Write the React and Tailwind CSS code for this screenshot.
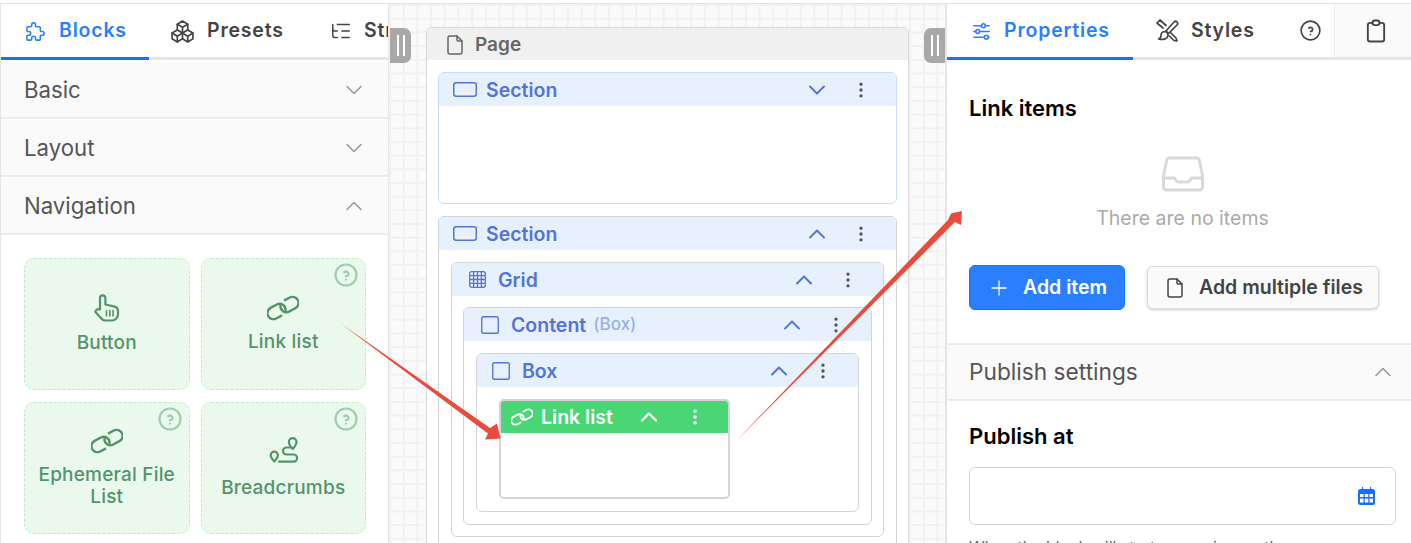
import React from 'react';
import {
  TbPuzzle, TbPackages, TbAdjustmentsHorizontal, TbHelpCircle, TbClipboard,
  TbChevronDown, TbChevronUp, TbDotsVertical, TbFile, TbSquare, TbPlus,
} from 'react-icons/tb';
import { ListTree } from 'lucide-react';

const HandIcon = () => (
  <svg width="26" height="28" viewBox="0 0 26 27" fill="none" stroke="currentColor" strokeWidth="2.2" strokeLinecap="round" strokeLinejoin="round">
    <path d="M6 15V3.500a2.700 2.700 0 0 1 5.400 0V10l8.500 1.800c2.500.5 4.100 2.100 4.100 4.600V19.500c0 4-3 6.500-6 6.500H11.500c-2.500 0-4-1.500-5.500-3.500L1.800 18c-1.200-1.700 1.700-4.500 4.200-3z" />
    <path d="M12.500 16v5.500M15.800 16v5.500M19 16v5.500" strokeWidth="1.600" />
  </svg>
);

const LinkIcon = ({ w = 32, h = 26, stroke = 2.4 }) => (
  <svg width={w} height={h} viewBox="0 0 32 26" fill="none" stroke="currentColor" strokeWidth={stroke} strokeLinecap="round" strokeLinejoin="round">
    <g transform="translate(9.500 16.500) rotate(-28)">
      <path d="M2 6H-3.500A6 6 0 0 1 -3.500 -6H3.500A6 6 0 0 1 8.500 3.300" />
    </g>
    <g transform="translate(22.500 9.500) rotate(152)">
      <path d="M2 6H-3.500A6 6 0 0 1 -3.500 -6H3.500A6 6 0 0 1 8.500 3.300" />
    </g>
  </svg>
);

const RouteIcon = () => (
  <svg width="33" height="30" viewBox="5 5 33 30" fill="none" stroke="currentColor" strokeWidth="2.200" strokeLinecap="round" strokeLinejoin="round" className="-mt-[3px] mb-[3px]">
    <path d="M30.700 20c-2.500-2.800-3.800-4.900-3.800-7a3.800 3.800 0 0 1 7.600 0c0 2.100-1.300 4.200-3.800 7z" />
    <path d="M12.300 32.500c-2.400-2.600-3.600-4.500-3.600-6.300a3.600 3.600 0 0 1 7.200 0c0 1.800-1.200 3.700-3.600 6.300z" />
    <path d="M28 18.500h-3.500a3.500 3.500 0 0 0 0 7h7a3.600 3.600 0 0 1 0 7.200H17" />
  </svg>
);

const BrushIcon = ({ size = 24 }) => (
  <svg width={size} height={size} viewBox="6 6 24 24" fill="none" stroke="currentColor" strokeWidth="1.700" strokeLinecap="round" strokeLinejoin="round">
    <path d="M17 18l8-9a2 2 0 0 1 3 3l-8.500 8.500z" />
    <path d="M16.500 18.500c-3 0-4.500 1.500-4.500 4 0 1.500-1 3-2.500 3.500 3.500 1 9 .5 9.500-3.500.2-1.500-.5-3-2.500-4z" />
    <path d="M14 15L8 10l3-3 6 5.500" />
    <path d="M21.500 19.500l5.500 5.500 1 3-3-.5-4.500-4.500" />
  </svg>
);

const RectIcon = () => (
  <svg width="24" height="15" viewBox="0 0 24 15" fill="none" stroke="currentColor" strokeWidth="1.500">
    <rect x="0.750" y="0.750" width="22.500" height="13.500" rx="2.500" />
  </svg>
);

const GridIcon = () => (
  <svg width="17" height="17" viewBox="0 0 17 17" fill="none" stroke="currentColor" strokeWidth="1.300">
    <rect x="0.700" y="0.700" width="15.600" height="15.600" rx="2" />
    <path d="M4.600 1v15M8.500 1v15M12.400 1v15M1 4.600h15M1 8.500h15M1 12.400h15" />
  </svg>
);

const InboxIcon = () => (
  <svg width="42" height="36" viewBox="0 0 41 36" fill="none" stroke="currentColor" strokeWidth="3" strokeLinejoin="round" strokeLinecap="round">
    <path d="M7 2h27a3 3 0 0 1 3 3l3 15v11a3 3 0 0 1-3 3H4a3 3 0 0 1-3-3V20L4 5a3 3 0 0 1 3-3z" />
    <path d="M1.500 22H12l2 3a2 2 0 0 0 2 1h9a2 2 0 0 0 2-1l2-3h10.500" />
  </svg>
);

const CalendarIcon = () => (
  <svg width="17" height="18" viewBox="0 0 17 18">
    <path d="M4.500 0.500v3M12.500 0.500v3" stroke="#1a6dff" strokeWidth="1.200" strokeLinecap="round" />
    <rect x="0" y="2" width="17" height="16" rx="2.500" fill="#1a6dff" />
    <g fill="#ffffff">
      <rect x="2" y="7" width="3.500" height="3" />
      <rect x="6.750" y="7" width="3.500" height="3" />
      <rect x="11.500" y="7" width="3.500" height="3" />
      <rect x="2" y="11.500" width="3.500" height="4" />
      <rect x="6.750" y="11.500" width="3.500" height="4" />
      <rect x="11.500" y="11.500" width="3.500" height="4" />
    </g>
  </svg>
);

const Tab = ({ icon, label, active, width, pl, gap = 'gap-[12px]' }) => (
  <div className={`flex items-center shrink-0 h-full pt-[1px] text-[19.500px] font-semibold tracking-[0.8px] ${width} ${pl} ${gap} ${active ? 'text-[#2a7fff]' : 'text-[#444444]'}`}>
    <span className="shrink-0">{icon}</span>
    <span className="whitespace-nowrap">{label}</span>
  </div>
);

const AccordionHead = ({ label, open }) => (
  <div className="flex items-center justify-between h-[57px] pt-[1px] pl-[23px] pr-[20px] bg-[#fafafa] border-b-[2px] border-[#ebebeb] mb-[1px] text-[#555555] text-[22.200px] leading-none">
    <span>{label}</span>
    {open ? <TbChevronUp size={28} strokeWidth={1.3} className="text-[#999999]" /> : <TbChevronDown size={28} strokeWidth={1.3} className="text-[#999999]" />}
  </div>
);

const BlockCard = ({ icon, label, help }) => (
  <div className="relative h-[132px] rounded-[10px] border border-dashed border-[#bdeec9] bg-[#ebf9ec] flex flex-col items-center justify-center px-2 text-center text-[#54946a] text-[19px] tracking-[0.2px] font-medium leading-[22px]">
    {help && <TbHelpCircle size={28} strokeWidth={1.9} className="absolute top-[2px] right-[5px] text-[#9fcdb0]" />}
    <div className="mb-[10px]">{icon}</div>
    <div>{label}</div>
  </div>
);

const Block = ({ icon, title, sub, pl, mt, down, borderClass = 'border-[#d4d4d4]', children }) => (
  <div className={`rounded-[6px] border bg-white ${borderClass} ${mt}`}>
    <div className={`flex items-center h-[33px] rounded-t-[5px] bg-[#e7f0fd] pr-[25px] text-[#5574d8] ${pl}`}>
      <span className="w-[24px] flex justify-center mr-[9px]">{icon}</span>
      <span className="pt-[2px] text-[19.500px] font-semibold leading-none">{title}</span>
      {sub && <span className="ml-[7px] text-[17px] font-medium text-[#9bb0e8]">{sub}</span>}
      <div className="ml-auto flex items-center gap-[20px]">
        {down ? <TbChevronDown size={28} strokeWidth={1.7} /> : <TbChevronUp size={28} strokeWidth={1.7} />}
        <TbDotsVertical size={20} strokeWidth={2} className="text-[#555555]" />
      </div>
    </div>
    {children}
  </div>
);

const App = () => {
  return (
    <div className="relative w-[1411px] h-[543px] overflow-hidden bg-white font-[Inter,sans-serif]">
      <div className="h-[4px] bg-white border-b border-[#e5e5e5]" />
      <div className="flex h-[539px]">
        {/* left panel */}
        <div className="w-[389px] shrink-0 border-l border-r border-[#e5e5e5] overflow-hidden">
          <div className="flex h-[53px] overflow-hidden">
            <Tab icon={<TbPuzzle size={23} strokeWidth={1.6} />} label="Blocks" active width="w-[148px]" pl="pl-[23px]" />
            <Tab icon={<TbPackages size={25} strokeWidth={1.6} />} label="Presets" width="w-[159px]" pl="pl-[21px]" />
            <Tab icon={<ListTree size={22} strokeWidth={1.6} />} label="Structure" width="w-[130px]" pl="pl-[22px]" />
          </div>
          <div className="h-[3px] bg-[#e5e5e5] mb-[2px]"><div className="w-[148px] h-full bg-[#1a6dff]" /></div>
          <AccordionHead label="Basic" />
          <AccordionHead label="Layout" />
          <AccordionHead label="Navigation" open />
          <div className="grid grid-cols-2 gap-x-[11px] gap-y-[12px] pt-[22px] pl-[23px] pr-[22px]">
            <BlockCard icon={<HandIcon />} label="Button" />
            <BlockCard icon={<LinkIcon />} label="Link list" help />
            <BlockCard icon={<LinkIcon />} label="Ephemeral File List" help />
            <BlockCard icon={<RouteIcon />} label="Breadcrumbs" help />
          </div>
        </div>

        {/* canvas */}
        <div className="relative w-[556px] shrink-0 overflow-hidden bg-[#fafafa] bg-[linear-gradient(#f1f1f1_2px,transparent_2px),linear-gradient(90deg,#f1f1f1_2px,transparent_2px)] bg-[size:13.700px_13.700px] pt-[23px] pl-[37px]">
          <div className="absolute top-[24px] left-[1px] w-[21px] h-[35px] rounded-r-[7px] bg-[#a8a8a8] flex justify-center gap-[4px] py-[7px]">
            <div className="w-[2px] bg-white" /><div className="w-[2px] bg-white" />
          </div>
          <div className="absolute top-[24px] right-0 w-[21px] h-[35px] rounded-l-[7px] bg-[#a8a8a8] flex justify-center gap-[4px] py-[7px]">
            <div className="w-[2px] bg-white" /><div className="w-[2px] bg-white" />
          </div>
          <div className="w-[483px] rounded-[6px] border border-[#d9d9d9] bg-white">
            <div className="flex items-center h-[32px] pt-[1px] rounded-t-[5px] bg-[#f0f0f0] pl-[16px] text-[#666666]">
              <TbFile size={24} strokeWidth={1.5} />
              <span className="ml-[8px] pt-[1px] text-[19px] font-semibold">Page</span>
            </div>
            <div className="px-[11px] py-[12px]">
              <Block icon={<RectIcon />} title="Section" pl="pl-[14px]" borderClass="border-[#c5dcfb]" down>
                <div className="h-[97px]" />
              </Block>
              <Block icon={<RectIcon />} title="Section" pl="pl-[14px]" mt="mt-[12px]">
                <div className="p-[12px]">
                  <Block icon={<GridIcon />} title="Grid" pl="pl-[13px]">
                    <div className="p-[11px]">
                      <Block icon={<TbSquare size={22} strokeWidth={1.5} />} title="Content" sub="(Box)" pl="pl-[14px]">
                        <div className="p-[12px]">
                          <Block icon={<TbSquare size={22} strokeWidth={1.5} />} title="Box" pl="pl-[12px]">
                            <div className="py-[12px] pl-[22px]">
                              <div className="w-[231px] h-[100px] rounded-[5px] border-[2px] border-[#d4d4d4] bg-white overflow-hidden">
                                <div className="flex items-center h-[32px] bg-[#4ad675] text-white pl-[10px] pr-[23px]">
                                  <LinkIcon w={22} h={18} stroke={2.6} />
                                  <span className="ml-[8px] pt-[1px] text-[19.500px] font-semibold">Link list</span>
                                  <div className="ml-auto flex items-center gap-[22px]">
                                    <TbChevronUp size={28} strokeWidth={1.9} />
                                    <TbDotsVertical size={20} strokeWidth={2.2} />
                                  </div>
                                </div>
                              </div>
                            </div>
                          </Block>
                        </div>
                      </Block>
                    </div>
                  </Block>
                </div>
              </Block>
            </div>
          </div>
        </div>

        {/* right panel */}
        <div className="flex-1 min-w-0 border-l-[2px] border-[#e5e5e5]">
          <div className="flex h-[53px]">
            <Tab icon={<TbAdjustmentsHorizontal size={23} strokeWidth={1.6} />} label="Properties" active width="w-[186px]" pl="pl-[23px]" gap="gap-[11px]" />
            <Tab icon={<BrushIcon />} label="Styles" width="w-[132px]" pl="pl-[22px]" gap="gap-[12px]" />
            <div className="flex-1 flex items-center justify-center text-[#444444] pl-[22px]"><TbHelpCircle size={25} strokeWidth={1.6} /></div>
            <div className="w-[77px] flex items-center justify-center border-l border-[#ececec] bg-[#fafafa] text-[#444444] pl-[6px]"><TbClipboard size={28} strokeWidth={1.6} /></div>
          </div>
          <div className="h-[3px] bg-[#e5e5e5]"><div className="w-[186px] h-full bg-[#1a6dff]" /></div>
          <div className="pl-[22px] pr-[15px]">
            <div className="pt-[36px] text-[22px] font-semibold text-black leading-[24px]">Link items</div>
            <div className="flex flex-col items-center mt-[36px]">
              <span className="text-[#d9d9d9]"><InboxIcon /></span>
              <div className="mt-[14px] text-[19.500px] leading-[24px] text-[#aaaaaa]">There are no items</div>
            </div>
            <div className="flex items-center gap-[22px] mt-[35px]">
              <button className="flex items-center justify-center gap-[12px] w-[156px] h-[45px] rounded-[6px] bg-[#2a7fff] border border-[#1a6dff] text-white text-[19.500px] font-semibold">
                <TbPlus size={24} strokeWidth={1.3} /> Add item
              </button>
              <button className="flex items-center justify-center gap-[12px] w-[232px] h-[43px] rounded-[6px] bg-[#fafafa] border border-[#dddddd] shadow-[0_1px_3px_rgba(0,0,0,0.2)] text-[#444444] text-[19.500px] font-semibold">
                <TbFile size={24} strokeWidth={1.5} /> Add multiple files
              </button>
            </div>
          </div>
          <div className="flex items-center justify-between mt-[33px] h-[58px] pl-[22px] pr-[14px] bg-[#fafafa] border-y-[2px] border-[#ebebeb] text-[#555555] text-[22.700px]">
            <span>Publish settings</span>
            <TbChevronUp size={28} strokeWidth={1.3} className="text-[#999999]" />
          </div>
          <div className="pl-[22px] pr-[15px]">
            <div className="pt-[23px] text-[22px] font-semibold text-black leading-[24px]">Publish at</div>
            <div className="flex items-center justify-end mt-[19px] h-[58px] rounded-[6px] border border-[#d4d4d4] pr-[20px]">
              <CalendarIcon />
            </div>
            <div className="mt-[10px] text-[16px] leading-[24px] text-[#666666] whitespace-nowrap">When the block will start appearing on the</div>
          </div>
        </div>
      </div>

      {/* annotation arrows */}
      <svg className="absolute inset-0 pointer-events-none" width="1411" height="543" viewBox="0 0 1411 543">
        <polygon points="340,323 490,428 497,423.500 500.500,438.500 485,439.500 488,433.500" fill="#e74c3c" />
        <polygon points="736,441 948,220 951,213.500 962,211 961,225 955,222" fill="#e74c3c" />
      </svg>
    </div>
  );
};

export default App;
